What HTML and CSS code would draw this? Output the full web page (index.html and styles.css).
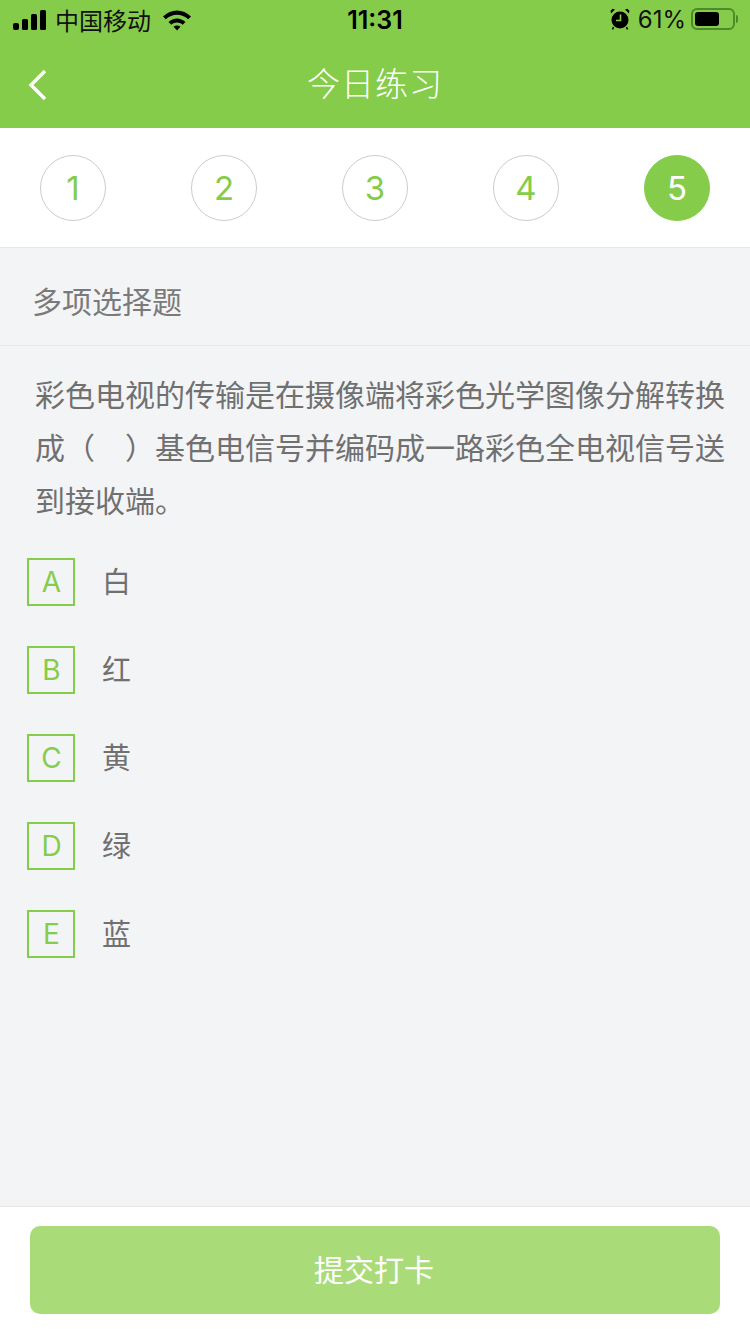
FILE: index.html
```html
<!DOCTYPE html>
<html lang="zh-CN">
<head>
  <meta charset="UTF-8" />
  <title>今日练习</title>
  <link rel="stylesheet" href="styles.css">
</head>
<body>
  <div class="page">
    <header class="top">
      <div class="status-bar">
        <div class="status-left">
          <svg class="signal" width="33" height="20" viewBox="0 0 33 20">
            <rect x="0" y="13" width="6" height="7" rx="2"/>
            <rect x="9" y="9" width="6" height="11" rx="1.5"/>
            <rect x="18" y="4" width="6" height="16" rx="1.5"/>
            <rect x="27" y="0" width="6" height="20" rx="1.5"/>
          </svg>
          <span class="carrier">中国移动</span>
          <svg class="wifi" width="30" height="22" viewBox="0 0 30 22">
            <path d="M1 7.5C9 -0.5 21 -0.5 29 7.5L26.2 10.3C19.8 4.2 10.2 4.2 3.8 10.3Z"/>
            <path d="M6.5 13C11.5 8.3 18.5 8.3 23.5 13L20.7 15.8C17.2 12.7 12.8 12.7 9.3 15.8Z"/>
            <path d="M11.5 17.8C13.5 16.1 16.5 16.1 18.5 17.8L15 21.5Z"/>
          </svg>
        </div>
        <span class="clock">11:31</span>
        <div class="status-right">
          <svg class="alarm" width="20" height="22" viewBox="0 0 20 22">
            <circle cx="10" cy="12" r="8.5"/>
            <path d="M1 5.5L5 1.5L2.5 0.8L0.6 2.7Z"/>
            <path d="M19 5.5L15 1.5L17.5 0.8L19.4 2.7Z"/>
            <path d="M3.5 19L2.5 21.5M16.5 19L17.5 21.5" stroke="#000" stroke-width="1.5"/>
            <path d="M10.5 6.5V12.5H6" fill="none" stroke="#86cc4b" stroke-width="1.6"/>
          </svg>
          <span class="battery-text">61%</span>
          <div class="battery"><div class="battery-fill"></div></div>
          <div class="battery-cap"></div>
        </div>
      </div>
      <div class="nav-bar">
        <svg class="back" width="20" height="32" viewBox="0 0 20 32">
          <path d="M17 2L3 16L17 30" fill="none" stroke="#fff" stroke-width="3.4"/>
        </svg>
        <span class="nav-title">今日练习</span>
      </div>
    </header>

    <div class="steps">
      <div class="step">1</div>
      <div class="step">2</div>
      <div class="step">3</div>
      <div class="step">4</div>
      <div class="step active">5</div>
    </div>

    <main class="content">
      <div class="q-type">多项选择题</div>
      <p class="question">彩色电视的传输是在摄像端将彩色光学图像分解转换成（　）基色电信号并编码成一路彩色全电视信号送到接收端。</p>
      <ul class="options">
        <li class="option"><span class="letter">A</span><span class="opt-text">白</span></li>
        <li class="option"><span class="letter">B</span><span class="opt-text">红</span></li>
        <li class="option"><span class="letter">C</span><span class="opt-text">黄</span></li>
        <li class="option"><span class="letter">D</span><span class="opt-text">绿</span></li>
        <li class="option"><span class="letter">E</span><span class="opt-text">蓝</span></li>
      </ul>
    </main>

    <footer class="bottom">
      <button class="submit">提交打卡</button>
    </footer>
  </div>
</body>
</html>
```

FILE: styles.css
```css
* {
  box-sizing: border-box;
}
html, body {
  margin: 0;
  padding: 0;
}
body {
  font-family: "Noto Sans CJK SC", "Liberation Sans", sans-serif;
  background-color: #f3f4f6;
  color: #666;
}
.page {
  width: 750px;
  height: 1334px;
  display: flex;
  flex-direction: column;
  overflow: hidden;
}

/* header */
.top {
  height: 128px;
  background-color: #86cc4b;
  flex: none;
}
.status-bar {
  height: 40px;
  padding: 0 12px 0 13px;
  display: flex;
  align-items: center;
  position: relative;
  color: #000;
}
.status-left {
  display: flex;
  align-items: center;
}
.signal {
  fill: #000;
  margin-right: 9px;
}
.carrier {
  font-size: 24px;
  line-height: 40px;
  color: #111;
}
.wifi {
  fill: #000;
  margin-left: 11px;
}
.clock {
  position: absolute;
  left: 0;
  right: 0;
  top: 0;
  text-align: center;
  font-family: Inter, "Liberation Sans", sans-serif;
  font-size: 25px;
  font-weight: 600;
  line-height: 41px;
}
.status-right {
  margin-left: auto;
  display: flex;
  align-items: center;
}
.alarm {
  fill: #000;
  margin-top: -2px;
  margin-right: 8px;
}
.battery-text {
  font-family: Inter, "Liberation Sans", sans-serif;
  font-size: 24px;
  line-height: 40px;
  margin-right: 5px;
  color: #111;
}
.battery {
  width: 44px;
  height: 22px;
  margin-top: -2px;
  border: 2px solid #4d8a2a;
  border-radius: 6px;
  padding: 2px;
}
.battery-fill {
  width: 24px;
  height: 14px;
  background-color: #000;
  border-radius: 3px;
}
.battery-cap {
  width: 2px;
  height: 8px;
  margin-top: -2px;
  margin-left: 1px;
  background-color: #4d8a2a;
  border-radius: 0 2px 2px 0;
}
.nav-bar {
  height: 88px;
  padding: 0 0 0 28px;
  display: flex;
  align-items: center;
  position: relative;
}
.back {
  margin-top: 2px;
}
.nav-title {
  position: absolute;
  left: 0;
  right: 0;
  top: 0;
  text-align: center;
  color: #fff;
  font-size: 33px;
  font-weight: 300;
  line-height: 85px;
  letter-spacing: 1px;
}

/* steps */
.steps {
  flex: none;
  height: 120px;
  padding: 0 40px;
  background-color: #fff;
  border-bottom: 1px solid #e8e8e8;
  display: flex;
  align-items: center;
  justify-content: space-between;
}
.step {
  width: 66px;
  height: 66px;
  border-radius: 50%;
  border: 1px solid #ccc;
  display: flex;
  align-items: center;
  justify-content: center;
  color: #86cc4b;
  font-family: Inter, "Liberation Sans", sans-serif;
  font-size: 33px;
  font-weight: 400;
}
.step.active {
  background-color: #86cc4b;
  border-color: #86cc4b;
  color: #fff;
}

/* question */
.content {
  flex: 1;
}
.q-type {
  height: 98px;
  padding-left: 32px;
  border-bottom: 1px solid #e8e9eb;
  font-size: 30px;
  font-weight: 400;
  line-height: 104px;
  color: #7a7a7a;
}
.question {
  margin: 0;
  padding: 21px 24px 0 35px;
  font-size: 30px;
  font-weight: 400;
  line-height: 53px;
  color: #707070;
}
.options {
  list-style: none;
  margin: 0;
  padding: 32px 0 0 27px;
}
.option {
  height: 88px;
  display: flex;
  align-items: flex-start;
}
.letter {
  width: 48px;
  height: 48px;
  padding-left: 1px;
  border: 2px solid #86cc4b;
  display: flex;
  align-items: center;
  justify-content: center;
  color: #86cc4b;
  font-family: Inter, "Liberation Sans", sans-serif;
  font-size: 28px;
  font-weight: 400;
}
.opt-text {
  margin-left: 27px;
  font-size: 29px;
  font-weight: 400;
  line-height: 44px;
  color: #707070;
}

/* submit */
.bottom {
  flex: none;
  height: 128px;
  background-color: #fff;
  border-top: 1px solid #e8e8e8;
  padding: 19px 30px 0;
}
.submit {
  display: block;
  width: 690px;
  height: 88px;
  padding: 0 2px 4px 0;
  border: 0;
  border-radius: 10px;
  background-color: #a9dc78;
  color: #fff;
  font-family: inherit;
  font-size: 30px;
  font-weight: 400;
}
```
